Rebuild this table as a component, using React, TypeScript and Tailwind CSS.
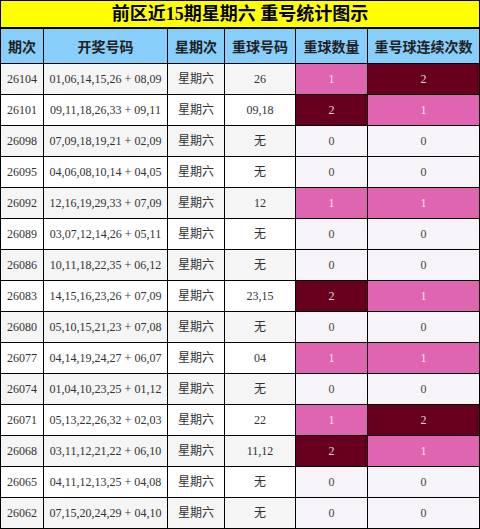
const rows: [string, string, string, number, number][] = [
  ["26104", "01,06,14,15,26 + 08,09", "26", 1, 2],
  ["26101", "09,11,18,26,33 + 09,11", "09,18", 2, 1],
  ["26098", "07,09,18,19,21 + 02,09", "无", 0, 0],
  ["26095", "04,06,08,10,14 + 04,05", "无", 0, 0],
  ["26092", "12,16,19,29,33 + 07,09", "12", 1, 1],
  ["26089", "03,07,12,14,26 + 05,11", "无", 0, 0],
  ["26086", "10,11,18,22,35 + 06,12", "无", 0, 0],
  ["26083", "14,15,16,23,26 + 07,09", "23,15", 2, 1],
  ["26080", "05,10,15,21,23 + 07,08", "无", 0, 0],
  ["26077", "04,14,19,24,27 + 06,07", "04", 1, 1],
  ["26074", "01,04,10,23,25 + 01,12", "无", 0, 0],
  ["26071", "05,13,22,26,32 + 02,03", "22", 1, 2],
  ["26068", "03,11,12,21,22 + 06,10", "11,12", 2, 1],
  ["26065", "04,11,12,13,25 + 04,08", "无", 0, 0],
  ["26062", "07,15,20,24,29 + 04,10", "无", 0, 0],
];

const headers = ["期次", "开奖号码", "星期次", "重球号码", "重球数量", "重号球连续次数"];

// 0 / 1 / 2 -> PuRd shades
const heat = (n: number) => {
  if (n === 2) return "bg-[#67001f] text-[#e8d6dc]";
  if (n === 1) return "bg-[#df65b0] text-[#fbe6f2]";
  return "bg-[#f7f4f9] text-[#444]";
};

export default function App() {
  return (
    <div className="w-[480px] bg-black p-px flex flex-col gap-[2px] font-['Liberation_Serif','Noto_Sans_CJK_SC',serif]">
      <div className="h-[26px] bg-[#ffff00] flex items-center justify-center text-[18px] font-bold text-black leading-none">
        前区近15期星期六 重号统计图示
      </div>

      <div className="grid grid-cols-[42px_123px_56px_70px_71px_111px] grid-rows-[34px_repeat(15,30px)] gap-px">
        {headers.map((h) => (
          <div
            key={h}
            className="bg-[#87cefa] flex items-center justify-center text-[14px] font-bold text-[#222] font-['Noto_Sans_CJK_SC',sans-serif]"
          >
            {h}
          </div>
        ))}

        {rows.map(([issue, nums, rep, count, streak], i) => {
          const bg = i % 2 === 0 ? "bg-[#f5f5f5]" : "bg-white";
          const cell = "flex items-center justify-center text-[12px] text-[#333]";
          return [
            <div key={issue + "a"} className={`${cell} ${bg}`}>{issue}</div>,
            <div key={issue + "b"} className={`${cell} ${bg}`}>{nums}</div>,
            <div key={issue + "c"} className={`${cell} ${bg}`}>星期六</div>,
            <div key={issue + "d"} className={`${cell} ${bg}`}>{rep}</div>,
            <div key={issue + "e"} className={`flex items-center justify-center text-[12px] ${heat(count)}`}>{count}</div>,
            <div key={issue + "f"} className={`flex items-center justify-center text-[12px] ${heat(streak)}`}>{streak}</div>,
          ];
        })}
      </div>
    </div>
  );
}
